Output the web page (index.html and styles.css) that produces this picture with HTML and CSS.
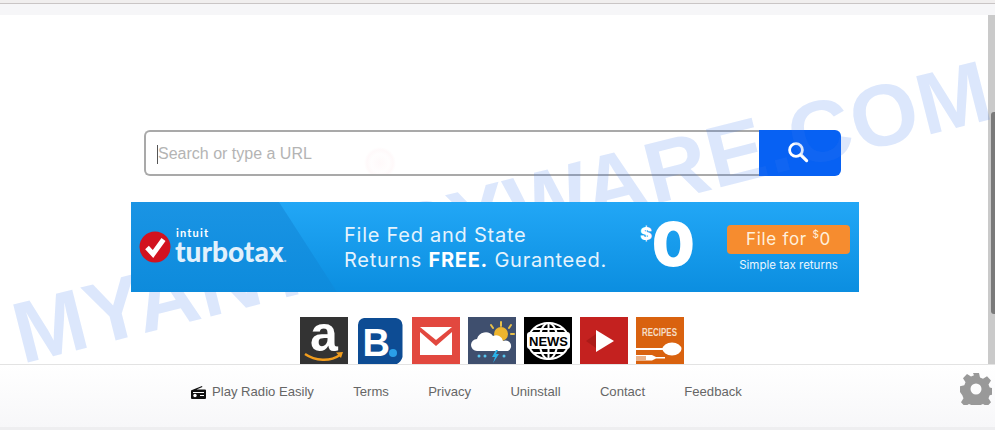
FILE: index.html
```html
<!DOCTYPE html>
<html lang="en">

<head>
    <meta charset="UTF-8">
    <meta name="viewport" content="width=device-width, initial-scale=1.0">
    <title>New Tab</title>
    <link rel="stylesheet" href="styles.css">
</head>

<body>
    <div class="top-strip"></div>

    <div class="main">
        <div class="content">
            <form class="search-form">
                <div class="search-box">
                    <span class="caret"></span>
                    <span class="placeholder">Search or type a URL</span>
                </div>
                <button type="button" class="search-button">
                    <svg width="22" height="22" viewBox="0 0 22 22" fill="none" stroke="#fff" stroke-linecap="round">
                        <circle cx="9" cy="9" r="6.4" stroke-width="2.8" />
                        <path d="M14 14l5.6 5.6" stroke-width="3.2" />
                    </svg>
                </button>
            </form>

            <div class="banner">
                <div class="brand">
                    <svg class="check" width="32" height="32" viewBox="0 0 32 32">
                        <circle cx="16" cy="16" r="15.5" fill="#d2121f" />
                        <path d="M8 16.5l6 6.5L24.5 8.5" fill="none" stroke="#fff" stroke-width="5" />
                    </svg>
                    <div class="brand-name">
                        <span class="intuit">intuit</span>
                        <span class="turbotax">turbotax<i>.</i></span>
                    </div>
                </div>
                <p class="pitch">File Fed and State<br>Returns <b>FREE.</b> Guranteed.</p>
                <div class="price"><sup>$</sup>0</div>
                <div class="cta">
                    <span class="cta-button">File for <sup>$</sup>0</span>
                    <span class="cta-note">Simple tax returns</span>
                </div>
            </div>

            <div class="tiles">
                <svg class="tile" viewBox="0 0 48 48">
                    <rect width="48" height="48" fill="#333" />
                    <text x="24" y="34" class="tile-a">a</text>
                    <path d="M5 37c10 7 25 8 35 1" fill="none" stroke="#f29d1d" stroke-width="2.4" />
                    <path d="M36 35.5l7-.5-2 6z" fill="#f29d1d" />
                </svg>
                <svg class="tile" viewBox="0 0 48 48">
                    <path d="M8 1h32a7 7 0 0 1 6.500 7v32a11 11 0 0 1-10 8H2V8a7 7 0 0 1 6-7z" fill="#0d4c94" />
                    <text x="6.500" y="39" class="tile-b">B</text>
                    <circle cx="37" cy="36" r="4" fill="#2a9fe8" />
                </svg>
                <svg class="tile" viewBox="0 0 48 48">
                    <rect width="48" height="48" fill="#e2483f" />
                    <path d="M8 10h32L24 23z" fill="#fff" />
                    <path d="M8 15l16 14 16-14v23H8z" fill="#fff" />
                </svg>
                <svg class="tile" viewBox="0 0 48 48">
                    <rect width="48" height="48" fill="#3f4f6e" />
                    <g stroke="#e8c04a" stroke-width="2" stroke-linecap="round">
                        <path d="M33 5v4M23 8l2 3M43 8l-2 3M46 17h-3" />
                    </g>
                    <circle cx="33" cy="17" r="7" fill="#eeb52f" />
                    <path d="M9 34a6 6 0 0 1 0-12 9 9 0 0 1 16-3 7 7 0 0 1 10 5 5 5 0 0 1 5 10z" fill="#fff" />
                    <path d="M28 33l-4 7h3l-2 6 6-9h-3l2-4z" fill="#2bb2e8" />
                    <g fill="#57c5ee">
                        <circle cx="11" cy="39" r="1.5" />
                        <circle cx="17" cy="39" r="1.5" />
                        <circle cx="36" cy="39" r="1.5" />
                    </g>
                </svg>
                <svg class="tile" viewBox="0 0 48 48">
                    <rect width="48" height="48" fill="#000" />
                    <g fill="none" stroke="#fff" stroke-width="2">
                        <ellipse cx="24.500" cy="24" rx="20.500" ry="18" />
                        <ellipse cx="24.500" cy="24" rx="9" ry="18" />
                        <path d="M24.500 6v36M10 12h29M10 36h29" />
                    </g>
                    <rect x="3" y="15" width="43" height="17" rx="3" fill="#fff" />
                    <text x="24.500" y="28.500" class="tile-news">NEWS</text>
                </svg>
                <svg class="tile" viewBox="0 0 48 48">
                    <rect width="48" height="48" fill="#c4211f" />
                    <path d="M6 24l10-7v14z" fill="#ab1b18" />
                    <path d="M16 13l18 11-18 11z" fill="#fff" />
                </svg>
                <svg class="tile" viewBox="0 0 48 48">
                    <rect width="48" height="48" fill="#d9620f" />
                    <text x="23.500" y="18.500" class="tile-recipes" textLength="35" lengthAdjust="spacingAndGlyphs">RECIPES</text>
                    <ellipse cx="36" cy="32" rx="9.500" ry="6.500" fill="#fff" />
                    <path d="M0 31h28v2H0zM0 38h16l4 2h9v1.500h-9l-4 2H0v-1h10v-1H0v-1h10v-1H0z" fill="#fff" />
                </svg>
            </div>
        </div>

        <div class="scrollbar">
            <div class="scrollbar-thumb"></div>
        </div>

        <div class="watermark">MYANTISPYWARE.COM</div>
    </div>

    <div class="footer">
        <nav class="footer-links">
            <a href="#" class="radio-link">
                <svg width="15" height="15" viewBox="0 0 15 15">
                    <path d="M1 5L11 1l.4 1L5.5 4.5H14a1 1 0 0 1 1 1V13a1 1 0 0 1-1 1H1a1 1 0 0 1-1-1V6a1 1 0 0 1 1-1z" fill="#111" />
                    <circle cx="4" cy="10.5" r="1.700" fill="#fff" />
                    <path d="M2 7h11v1H2zM9 10h4v1H9z" fill="#fff" />
                </svg>
                Play Radio Easily
            </a>
            <a href="#">Terms</a>
            <a href="#">Privacy</a>
            <a href="#">Uninstall</a>
            <a href="#">Contact</a>
            <a href="#">Feedback</a>
        </nav>
        <svg class="gear" width="32" height="32" viewBox="0 0 32 32">
            <path fill="#999" fill-rule="evenodd" d="M13 0h6l1 4.500 3 1.300 4-2.500 4 4.200-2.500 4 1.200 3 4.300 1v5.800l-4.300 1-1.200 3 2.500 4-4 4.200-4-2.500-3 1.300-1 4.200h-6l-1-4.200-3-1.300-4 2.500-4-4.200 2.500-4-1.200-3L0 19v-5.800l4.300-1 1.200-3-2.500-4 4-4.200 4 2.500 3-1.300zM16 10.500a5.500 5.500 0 1 0 0 11 5.500 5.500 0 0 0 0-11z" />
        </svg>
    </div>
</body>

</html>
```

FILE: styles.css
```css
/* Basic reset */
* {
    margin: 0;
    padding: 0;
    box-sizing: border-box;
}

body {
    font-family: 'Liberation Sans', Arial, sans-serif;
    display: flex;
    flex-direction: column;
    height: 100vh;
    overflow: hidden;
    background-color: #ffffff;
}

.top-strip {
    height: 15px;
    flex-shrink: 0;
    background: linear-gradient(#f0eeee 0, #f0eeee 3px, #c9c5c5 3px, #c9c5c5 4px, #f6f6f8 4px);
}

.main {
    position: relative;
    flex: 1;
    display: flex;
    overflow: hidden;
}

.content {
    flex: 1;
    padding: 115px 0 0 131px;
}

.search-form {
    display: flex;
    width: 697px;
    height: 46px;
    margin-left: 13px;
}

.search-box {
    flex: 1;
    display: flex;
    align-items: center;
    padding: 2px 0 0 11px;
    background: radial-gradient(circle at 234px 31px, rgba(240, 100, 120, 0.04) 0, rgba(240, 100, 120, 0.01) 9px, rgba(240, 100, 120, 0.04) 13px, transparent 16px), #fff;
    border: 2px solid #a9a9a9;
    border-right: none;
    border-radius: 6px 0 0 6px;
}

.caret {
    width: 1px;
    height: 19px;
    background-color: #555;
}

.placeholder {
    font-size: 16px;
    color: #b4b4b4;
}

.search-button {
    width: 82px;
    display: flex;
    align-items: center;
    justify-content: center;
    padding: 0 4px 2px 0;
    border: none;
    border-radius: 0 6px 6px 0;
    background-color: #0761f3;
}

.banner {
    position: relative;
    z-index: 1;
    display: flex;
    align-items: center;
    width: 728px;
    height: 90px;
    margin-top: 26px;
    color: #ffffff;
    background: linear-gradient(#22a7f6, #0b8ee0);
}

.banner::before {
    content: "";
    position: absolute;
    top: 0;
    bottom: 0;
    left: 0;
    width: 206px;
    background: linear-gradient(#1a94e4, #0d8bdc);
    clip-path: polygon(0 0, 148px 0, 206px 100%, 0 100%);
}

.banner > * {
    position: relative;
}

.brand {
    display: flex;
    align-items: center;
    gap: 4px;
    width: 213px;
    padding-left: 8px;
}

.brand-name {
    display: flex;
    flex-direction: column;
    font-family: 'Lato', sans-serif;
    margin-top: 1px;
}

.intuit {
    font-size: 11px;
    font-weight: 700;
    line-height: 12px;
    letter-spacing: 1.2px;
    padding-left: 1px;
}

.turbotax {
    font-size: 28px;
    font-weight: 900;
    line-height: 24px;
    color: #e2f1fc;
}

.turbotax i {
    font-size: 14px;
    color: #8cc8f0;
}

.pitch {
    width: 296px;
    margin-top: 2px;
    font-family: 'Inter', sans-serif;
    font-size: 20px;
    line-height: 25px;
    letter-spacing: 0.75px;
    color: #e4f3fd;
}

.pitch b {
    color: #ffffff;
}

.price {
    width: 87px;
    font-family: 'Inter', sans-serif;
    font-size: 60px;
    font-weight: 900;
    line-height: 50px;
    margin-top: -6px;
}

.price sup {
    font-size: 18px;
    vertical-align: 26px;
    line-height: 0;
}

.cta {
    display: flex;
    flex-direction: column;
    align-items: center;
    width: 123px;
    margin-top: 3px;
}

.cta-button {
    width: 100%;
    height: 29px;
    line-height: 29px;
    text-align: center;
    font-family: 'Inter', sans-serif;
    font-size: 17px;
    letter-spacing: 0.7px;
    color: #fff0dc;
    background-color: #f68c2f;
    border-radius: 4px;
}

.cta-button sup {
    font-size: 10px;
    line-height: 0;
}

.cta-note {
    margin-top: 4px;
    font-family: 'Inter', sans-serif;
    font-size: 11.500px;
    color: #eaf6fe;
}

.tiles {
    display: flex;
    gap: 8px;
    margin: 25px 0 0 169px;
}

.tile {
    width: 48px;
    height: 48px;
    flex-shrink: 0;
    overflow: visible;
}

.tile-a {
    font-family: 'Liberation Sans', sans-serif;
    font-size: 50px;
    font-weight: 700;
    text-anchor: middle;
    fill: #ffffff;
}

.tile-b {
    font-family: 'Liberation Sans', sans-serif;
    font-size: 38px;
    font-weight: 700;
    fill: #ffffff;
}

.tile-news {
    font-family: 'Liberation Sans', sans-serif;
    font-size: 13px;
    font-weight: 700;
    text-anchor: middle;
    fill: #000000;
}

.tile-recipes {
    font-family: 'Liberation Sans', sans-serif;
    font-size: 10.500px;
    font-weight: 700;
    text-anchor: middle;
    fill: #f5dcc4;
}

.scrollbar {
    width: 7px;
    flex-shrink: 0;
    padding: 97px 0 0 3px;
    background-color: #cacaca;
}

.scrollbar-thumb {
    height: 202px;
    background-color: #7a7a7a;
    border-radius: 3px 0 0 3px;
}

.watermark {
    position: absolute;
    top: 277px;
    left: 15px;
    font-size: 87px;
    font-weight: 700;
    letter-spacing: 1px;
    line-height: 86px;
    white-space: nowrap;
    color: rgba(60, 120, 240, 0.18);
    transform: rotate(-14.200deg);
    transform-origin: left center;
    pointer-events: none;
}

.footer {
    position: relative;
    height: 66px;
    flex-shrink: 0;
    display: flex;
    align-items: flex-start;
    border-top: 1px solid #e3e3e3;
    border-bottom: 3px solid #eeeef0;
    background: linear-gradient(#ffffff, #f7f7f9);
}

.footer-links {
    display: flex;
    gap: 39.300px;
    padding: 19px 0 0 191px;
}

.footer-links a {
    font-size: 13.100px;
    line-height: 16px;
    color: #666666;
    text-decoration: none;
}

.radio-link {
    display: flex;
    align-items: center;
    gap: 6px;
}

.gear {
    position: absolute;
    top: 8px;
    right: 3px;
}
```
